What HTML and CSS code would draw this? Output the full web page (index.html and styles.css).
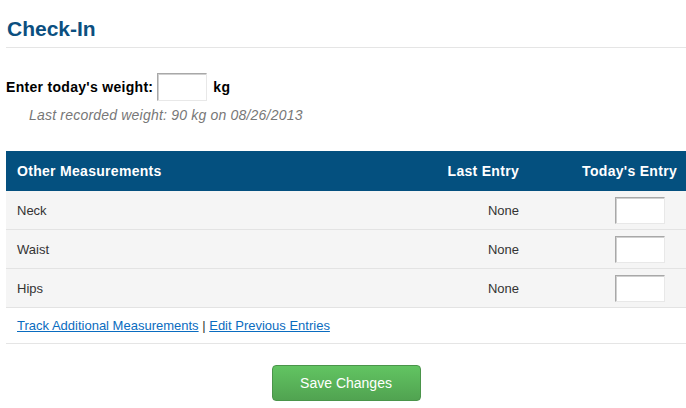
FILE: index.html
```html
<!DOCTYPE html>
<html lang="en">
<head>
    <meta charset="UTF-8">
    <meta name="viewport" content="width=device-width, initial-scale=1.0">
    <title>Check-In</title>
    <link rel="stylesheet" href="styles.css">
</head>
<body>
    <div class="page">
        <h1 class="title">Check-In</h1>

        <div class="weight">
            <label for="weight">Enter today's weight:</label>
            <input type="text" id="weight" class="box">
            <span>kg</span>
        </div>
        <p class="last">Last recorded weight: 90 kg on 08/26/2013</p>

        <table class="measures">
            <thead>
                <tr>
                    <th class="name">Other Measurements</th>
                    <th class="prev">Last Entry</th>
                    <th class="today">Today's Entry</th>
                </tr>
            </thead>
            <tbody>
                <tr>
                    <td class="name">Neck</td>
                    <td class="prev">None</td>
                    <td class="today"><input type="text" class="box"></td>
                </tr>
                <tr>
                    <td class="name">Waist</td>
                    <td class="prev">None</td>
                    <td class="today"><input type="text" class="box"></td>
                </tr>
                <tr>
                    <td class="name">Hips</td>
                    <td class="prev">None</td>
                    <td class="today"><input type="text" class="box"></td>
                </tr>
            </tbody>
        </table>

        <div class="links">
            <a href="#">Track Additional Measurements</a> | <a href="#">Edit Previous Entries</a>
        </div>

        <div class="actions">
            <button type="button" class="save-btn">Save Changes</button>
        </div>
    </div>
</body>
</html>
```

FILE: styles.css
```css
body {
    font-family: "Liberation Sans", Arial, sans-serif;
    font-size: 13px;
    color: #333;
    margin: 0;
    background-color: #fff;
}
.page {
    padding-left: 6px;
}
.title {
    margin: 0;
    padding: 17px 0 6px 1px;
    font-size: 21px;
    line-height: 24px;
    color: #0b4f80;
    border-bottom: 1px solid #e5e5e5;
}
.weight {
    display: flex;
    align-items: center;
    margin-top: 25px;
    height: 28px;
    font-size: 14px;
    font-weight: bold;
    color: #000;
}
.weight label {
    margin-right: 4px;
    letter-spacing: 0.3px;
}
.weight span {
    margin-left: 6px;
    letter-spacing: 0.5px;
}
.box {
    box-sizing: border-box;
    width: 50px;
    height: 28px;
    margin: 0;
    padding: 2px 4px;
    background-color: #fff;
    border: 1px solid;
    border-color: #a8a8a8 #e8e8e8 #e8e8e8 #a8a8a8;
    box-shadow: inset 1px 1px 0 #d0d0d0;
    font: inherit;
}
.last {
    margin: 5px 0 0;
    padding-left: 23px;
    font-size: 14px;
    line-height: 18px;
    font-style: italic;
    letter-spacing: 0.2px;
    color: #777;
}
.measures {
    width: 100%;
    border-collapse: collapse;
    margin-top: 27px;
}
.measures th {
    height: 40px;
    padding: 0 9px 0 11px;
    background-color: #04507f;
    color: #fff;
    font-size: 14px;
    font-weight: bold;
    letter-spacing: 0.3px;
    text-align: left;
}
.measures td {
    height: 38px;
    padding: 0 9px 0 11px;
    background-color: #f5f5f5;
    border-bottom: 1px solid #e3e3e3;
}
.measures .prev {
    text-align: right;
    width: 120px;
}
.measures .today {
    text-align: right;
    width: 126px;
}
.measures th.today {
    padding-left: 23px;
}
.measures td.today {
    padding-right: 21px;
}
.measures td .box {
    height: 27px;
    vertical-align: middle;
}
.links {
    height: 35px;
    line-height: 35px;
    padding-left: 11px;
    border-bottom: 1px solid #e5e5e5;
    color: #333;
}
.links a {
    color: #0a6cc0;
}
.actions {
    text-align: center;
    padding-top: 21px;
}
.save-btn {
    width: 149px;
    height: 36px;
    font-family: inherit;
    font-size: 14px;
    color: #fff;
    background: linear-gradient(#62c462, #51a351);
    border: 1px solid #4a944a;
    border-radius: 4px;
    cursor: pointer;
}
.save-btn:hover {
    background: #51a351;
}
```
